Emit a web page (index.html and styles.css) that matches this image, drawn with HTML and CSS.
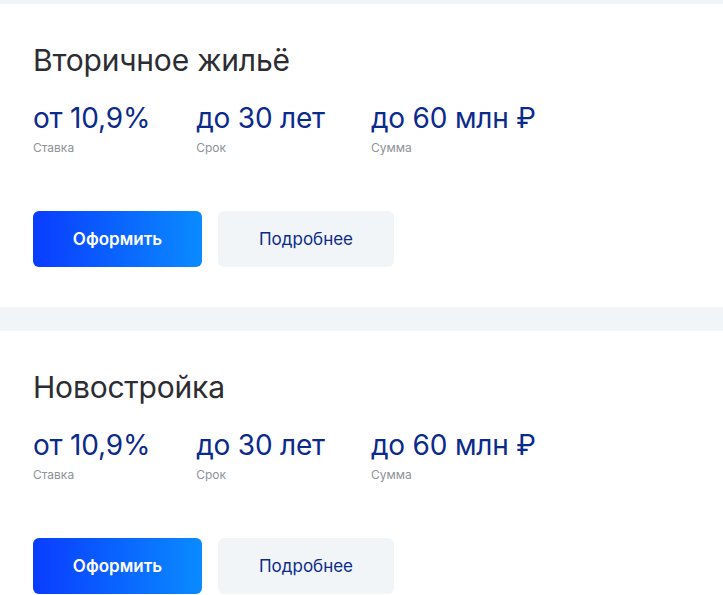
FILE: index.html
```html
<!DOCTYPE html>
<html lang="ru">
<head>
<meta charset="utf-8">
<link rel="stylesheet" href="styles.css">
</head>
<body>
<div class="page">
  <section class="card">
    <h2 class="title">Вторичное жильё</h2>
    <div class="facts">
      <div class="fact"><div class="value">от 10,9%</div><div class="label">Ставка</div></div>
      <div class="fact"><div class="value">до 30 лет</div><div class="label">Срок</div></div>
      <div class="fact"><div class="value">до 60 млн ₽</div><div class="label">Сумма</div></div>
    </div>
    <div class="actions">
      <button class="btn btn-primary">Оформить</button>
      <button class="btn btn-secondary">Подробнее</button>
    </div>
  </section>
  <section class="card">
    <h2 class="title">Новостройка</h2>
    <div class="facts">
      <div class="fact"><div class="value">от 10,9%</div><div class="label">Ставка</div></div>
      <div class="fact"><div class="value">до 30 лет</div><div class="label">Срок</div></div>
      <div class="fact"><div class="value">до 60 млн ₽</div><div class="label">Сумма</div></div>
    </div>
    <div class="actions">
      <button class="btn btn-primary">Оформить</button>
      <button class="btn btn-secondary">Подробнее</button>
    </div>
  </section>
</div>
</body>
</html>
```
FILE: styles.css
```css
html, body {
  margin: 0;
  padding: 0;
  background: #f2f5f8;
  font-family: Inter, "Noto Sans", sans-serif;
}
.page {
  padding-top: 4px;
  display: flex;
  flex-direction: column;
  gap: 24px;
}
.card {
  background: #ffffff;
  padding: 36px 33px 40px;
}
.title {
  margin: 0;
  font-size: 30px;
  line-height: 40px;
  font-weight: 400;
  color: #2b2d33;
  letter-spacing: -0.2px;
}
.facts {
  display: flex;
  gap: 46px;
  margin-top: 21px;
}
.value {
  font-size: 28px;
  line-height: 34px;
  color: #0b2a8c;
  letter-spacing: -0.2px;
}
.label {
  margin-top: 5px;
  font-size: 12px;
  line-height: 16px;
  color: #8d9399;
}
.actions {
  display: flex;
  gap: 16px;
  margin-top: 55px;
}
.btn {
  height: 56px;
  border: none;
  border-radius: 6px;
  font-family: inherit;
  font-size: 17px;
  cursor: pointer;
}
.btn-primary {
  width: 169px;
  background: linear-gradient(90deg, #0a3cff 0%, #0a8bff 100%);
  color: #ffffff;
  font-weight: 600;
}
.btn-secondary {
  width: 176px;
  background: #f2f5f8;
  color: #0b2a8c;
  font-weight: 400;
}
```
